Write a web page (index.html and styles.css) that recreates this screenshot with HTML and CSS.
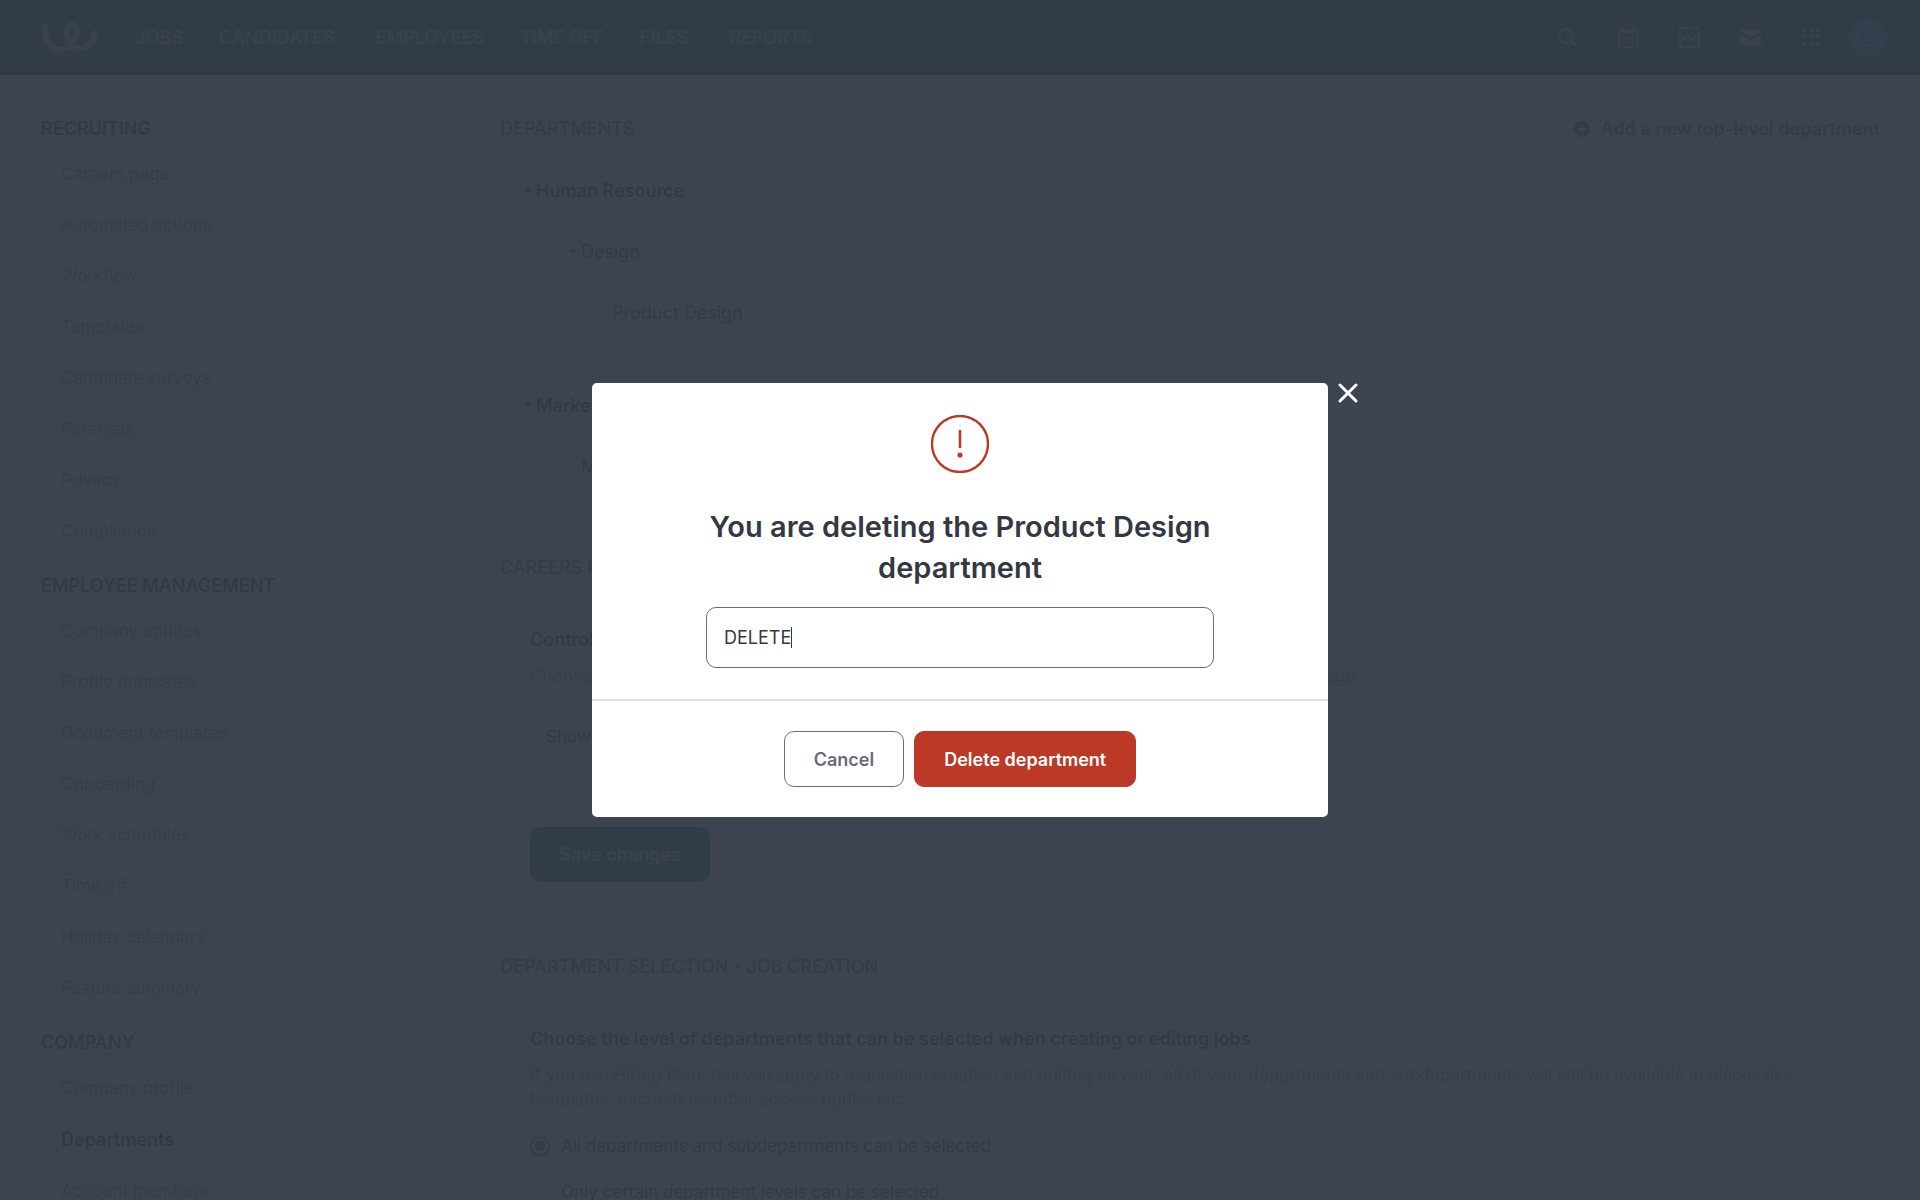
FILE: index.html
```html
<!DOCTYPE html>
<html lang="en">
<head>
  <meta charset="UTF-8" />
  <meta name="viewport" content="width=device-width, initial-scale=1.0" />
  <title>Departments</title>
  <link rel="stylesheet" href="styles.css">
</head>

<body>
  <div class="page">
    <header class="topbar">
      <a class="logo" href="#" aria-label="Home">
        <svg width="58" height="32" viewBox="0 0 58 32" fill="none" stroke="currentColor" stroke-width="6" stroke-linecap="round" stroke-linejoin="round">
          <path d="M4 4c0 12 4 24 13 24 10 0 19-11 19-19 0-8-10-8-10 0 0 10 4 18 11 18 10 0 16-8 17-16" />
        </svg>
      </a>
      <nav class="main-nav">
        <a href="#">JOBS</a>
        <a class="wide" href="#">CANDIDATES</a>
        <a href="#">EMPLOYEES</a>
        <a href="#">TIME OFF</a>
        <a class="wide" href="#">FILES</a>
        <a href="#">REPORTS</a>
      </nav>
      <div class="tools">
        <button type="button" aria-label="Search">
          <svg width="21" height="21" viewBox="0 0 21 21" fill="none" stroke="currentColor" stroke-width="2"><circle cx="9" cy="9" r="7" /><path d="M14 14l6 5" stroke-width="3" /></svg>
        </button>
        <button type="button" aria-label="Calendar">
          <svg width="21" height="21" viewBox="0 0 21 21" fill="none" stroke="currentColor" stroke-width="2"><rect x="1" y="3" width="19" height="17" rx="2" /><path d="M5 0v5M16 0v5M1 5h19" stroke-width="3" /><path d="M6 9v9M10 9v9M14 9v9M4 11h13M4 15h13" stroke-width="1" /></svg>
        </button>
        <button type="button" aria-label="Activity">
          <svg width="21" height="21" viewBox="0 0 21 21" fill="none" stroke="currentColor" stroke-width="2"><rect x="1" y="1" width="19" height="19" /><path d="M2 11h4l3-4 4 7 3-4h3" /></svg>
        </button>
        <button type="button" aria-label="Inbox">
          <svg width="21" height="21" viewBox="0 0 21 21" fill="currentColor"><path d="M0 2h21v2l-10 6L0 4zM0 7l11 6 10-6v12H0z" /></svg>
        </button>
        <button type="button" aria-label="Apps">
          <svg width="21" height="21" viewBox="0 0 21 21" fill="currentColor"><path d="M1 1h4v4H1zM8 1h4v4H8zM15 1h4v4h-4zM1 8h4v4H1zM8 8h4v4H8zM15 8h4v4h-4zM1 15h4v4H1zM8 15h4v4H8zM15 15h4v4h-4z" /></svg>
        </button>
        <button type="button" class="avatar" aria-label="Account">
          <svg width="16" height="16" viewBox="0 0 16 16" fill="none" stroke="currentColor" stroke-width="2"><path d="M2 2v11h11M5 3l8 7" /></svg>
        </button>
      </div>
    </header>

    <div class="content">
      <aside class="sidebar">
        <h2>RECRUITING</h2>
        <ul>
          <li><a href="#">Careers page</a></li>
          <li><a href="#">Automated actions</a></li>
          <li><a href="#">Workflow</a></li>
          <li><a href="#">Templates</a></li>
          <li><a href="#">Candidate surveys</a></li>
          <li><a href="#">Referrals</a></li>
          <li><a href="#">Privacy</a></li>
          <li><a href="#">Compliance</a></li>
        </ul>
        <h2>EMPLOYEE MANAGEMENT</h2>
        <ul>
          <li><a href="#">Company entities</a></li>
          <li><a href="#">Profile templates</a></li>
          <li><a href="#">Document templates</a></li>
          <li><a href="#">Onboarding</a></li>
          <li><a href="#">Work schedules</a></li>
          <li><a href="#">Time off</a></li>
          <li><a href="#">Holiday calendars</a></li>
          <li><a href="#">Feature summary</a></li>
        </ul>
        <h2>COMPANY</h2>
        <ul>
          <li><a href="#">Company profile</a></li>
          <li><a class="active" href="#">Departments</a></li>
          <li><a href="#">Account members</a></li>
        </ul>
      </aside>

      <main>
        <section>
          <div class="section-head">
            <h2>DEPARTMENTS</h2>
            <a class="add-link" href="#">
              <svg width="16" height="16" viewBox="0 0 16 16"><circle cx="8" cy="8" r="8" fill="currentColor" /><path d="M8 4v8M4 8h8" stroke="#ffffff" stroke-width="2" /></svg>
              Add a new top-level department
            </a>
          </div>
          <div class="card tree">
            <ul>
              <li class="level-1"><span class="caret"></span>Human Resource</li>
              <li class="level-2"><span class="caret"></span>Design</li>
              <li class="level-3">Product Design</li>
            </ul>
            <ul>
              <li class="level-1"><span class="caret"></span>Marketing</li>
              <li class="level-2 leaf">Media</li>
            </ul>
          </div>
        </section>

        <section>
          <div class="section-head">
            <h2>CAREERS PAGE</h2>
          </div>
          <form class="card">
            <h3>Control how departments are shown</h3>
            <p>Choose the level of departments and subdepartments that candidates see on your public careers page</p>
            <p class="option">Show all departments</p>
            <button type="button" class="save">Save changes</button>
          </form>
        </section>

        <section>
          <div class="section-head">
            <h2>DEPARTMENT SELECTION - JOB CREATION</h2>
          </div>
          <form class="card">
            <h3>Choose the level of departments that can be selected when creating or editing jobs</h3>
            <p>If you use Hiring Plan, this will apply to requisition creation and editing as well. All of your departments and subdepartments will still be available in places like templates, account member access rights, etc.</p>
            <label class="choice"><input type="radio" name="level" checked>All departments and subdepartments can be selected</label>
            <label class="choice"><input type="radio" name="level">Only certain department levels can be selected</label>
          </form>
        </section>
      </main>
    </div>
  </div>

  <div class="overlay">
    <div class="modal" role="dialog" aria-modal="true" aria-labelledby="modalTitle">
      <button type="button" class="close" aria-label="Close">
        <svg width="20" height="20" viewBox="0 0 20 20" stroke="currentColor" stroke-width="3" stroke-linecap="round"><path d="M2 2l16 16M18 2L2 18" /></svg>
      </button>
      <div class="modal-body">
        <svg width="58" height="58" viewBox="0 0 58 58" fill="none" stroke="#bb3926">
          <circle cx="29" cy="29" r="28" stroke-width="2.4" />
          <path d="M29 16v16" stroke-width="2.6" stroke-linecap="round" />
          <circle cx="29" cy="40" r="2.6" fill="#bb3926" stroke="none" />
        </svg>
        <h1 id="modalTitle">You are deleting the Product Design department</h1>
        <input type="text" id="confirmText" value="DELETE" aria-labelledby="modalTitle" autocomplete="off">
      </div>
      <div class="modal-footer">
        <button type="button" class="cancel">Cancel</button>
        <button type="button" class="delete">Delete department</button>
      </div>
    </div>
  </div>
</body>
</html>
```
FILE: styles.css
```css
* {
  box-sizing: border-box;
}

body {
  margin: 0;
  font-family: Inter, "Liberation Sans", sans-serif;
  font-size: 18px;
  line-height: 24px;
  color: #333942;
}

h1, h2, h3, p, ul {
  margin: 0;
  padding: 0;
}

ul {
  list-style: none;
}

a {
  color: inherit;
  text-decoration: none;
}

button, input {
  font-family: inherit;
  font-size: 18px;
}

.page {
  height: 100vh;
  overflow: hidden;
  background: #f4f5f8;
}

/* top bar */
.topbar {
  display: flex;
  align-items: center;
  height: 75px;
  padding: 0 33px 0 41px;
  background: #007858;
  color: #b4acc8;
}

.logo svg {
  display: block;
}

.main-nav {
  display: flex;
  gap: 36px;
  margin-left: 36px;
  font-weight: 600;
}

.main-nav .wide {
  margin-right: 5px;
}

.tools {
  display: flex;
  align-items: center;
  gap: 40px;
  margin-left: auto;
}

.tools button {
  display: flex;
  padding: 0;
  border: none;
  background: none;
  color: inherit;
}

.tools .avatar {
  align-items: center;
  justify-content: center;
  width: 38px;
  height: 38px;
  margin-left: -13px;
  border-radius: 50%;
  background: #20a0d0;
  color: #105080;
}

.content {
  display: flex;
}

/* settings menu */
.sidebar {
  flex: 0 0 500px;
  padding: 33px 0 0 41px;
}

.sidebar h2 {
  font-size: 18px;
  font-weight: 600;
  line-height: 41px;
}

.sidebar ul {
  margin: 0 0 8px 20px;
}

.sidebar li {
  font-size: 17px;
  line-height: 51px;
  color: #608898;
}

.sidebar .active {
  font-size: 18px;
  font-weight: 600;
  color: #202830;
}

/* main column */
main {
  flex: 1;
  padding: 33px 40px 0 0;
}

.section-head {
  display: flex;
  justify-content: space-between;
  align-items: center;
  height: 41px;
  margin-bottom: 10px;
  color: #00756a;
}

.section-head h2 {
  font-size: 18px;
  font-weight: 500;
}

.add-link {
  display: flex;
  align-items: center;
  gap: 11px;
  font-weight: 600;
}

.card {
  padding: 30px;
  margin-bottom: 34px;
  border-radius: 4px;
  background: #ffffff;
}

.tree {
  padding: 1px 24px 16px;
}

.tree ul + ul {
  margin-top: 32px;
}

.tree li {
  display: flex;
  align-items: center;
  height: 61px;
}

.level-1 {
  font-weight: 600;
}

.level-2 {
  padding-left: 45px;
}

.level-3 {
  padding-left: 88px;
}

.leaf {
  padding-left: 57px;
}

.caret {
  width: 8px;
  height: 5px;
  margin-right: 4px;
  background: #60666f;
  clip-path: polygon(0 0, 100% 0, 50% 100%);
}

.card h3 {
  margin-bottom: 12px;
  font-size: 18px;
  font-weight: 600;
}

.card p {
  margin-bottom: 12px;
  font-size: 17px;
  color: #808790;
}

.card .option {
  margin: 37px 0 78px 16px;
  color: #333942;
}

.save {
  height: 55px;
  padding: 0 29px;
  border: none;
  border-radius: 10px;
  background: #007858;
  color: #d0d8e0;
  font-weight: 600;
}

.choice {
  display: flex;
  align-items: center;
  height: 46px;
  font-size: 17px;
}

.choice input {
  appearance: none;
  width: 20px;
  height: 20px;
  margin: 0 11px 0 0;
  border: 2px solid #f4f5f8;
  border-radius: 50%;
}

.choice input:checked {
  border-color: #00756a;
  background: radial-gradient(#00756a 5px, #ffffff 6px);
}

/* confirmation dialog */
.overlay {
  position: fixed;
  inset: 0;
  display: flex;
  align-items: center;
  justify-content: center;
  background: rgba(52, 58, 70, 0.95);
}

.modal {
  position: relative;
  width: 736px;
  border-radius: 5px;
  background: #ffffff;
}

.close {
  position: absolute;
  top: 0;
  right: -30px;
  padding: 0;
  border: none;
  background: none;
  color: #ffffff;
}

.close svg {
  display: block;
}

.modal-body {
  display: flex;
  flex-direction: column;
  align-items: center;
  padding: 32px 114px 31px;
  border-bottom: 2px solid #dfe3ea;
}

.modal-body h1 {
  margin: 33px 0 19px;
  font-size: 29px;
  font-weight: 600;
  line-height: 41px;
  text-align: center;
}

/* the text cursor is drawn as a thin background line */
.modal-body input {
  width: 100%;
  height: 61px;
  padding: 0 17px;
  border: 1px solid #6b6c7e;
  border-radius: 10px;
  outline: none;
  background: linear-gradient(#333942, #333942) 84px center / 1px 21px no-repeat;
  caret-color: transparent;
  color: #333942;
}

.modal-footer {
  display: flex;
  justify-content: center;
  gap: 10px;
  padding: 30px;
}

.modal-footer button {
  height: 56px;
  padding: 0 29px;
  border: 1px solid #6b6c7e;
  border-radius: 10px;
  background: #ffffff;
  color: #696b78;
  font-weight: 600;
}

.modal-footer .delete {
  border-color: #bb3926;
  background: #bb3926;
  color: #ffffff;
}
```
